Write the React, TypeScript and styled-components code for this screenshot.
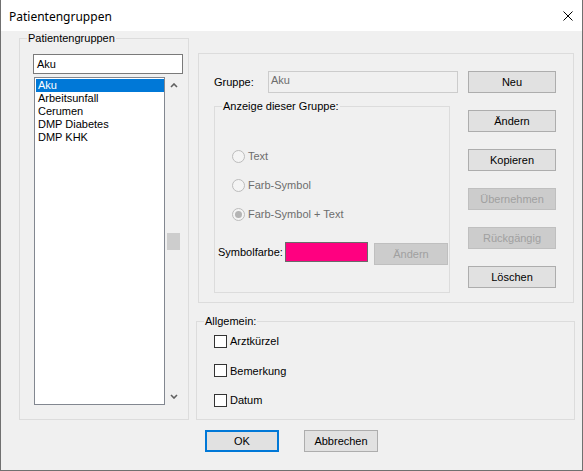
import React from 'react';
import styled, { createGlobalStyle } from 'styled-components';

const GlobalStyle = createGlobalStyle`
  html, body {
    margin: 0;
    padding: 0;
    background: #ffffff;
  }
  * {
    box-sizing: border-box;
  }
`;

const Window = styled.div`
  width: 583px;
  height: 471px;
  display: flex;
  flex-direction: column;
  background: #f0f0f0;
  border: 1px solid #707070;
  border-top: none;
  font-family: "Liberation Sans", Arial, sans-serif;
  font-size: 11px;
  color: #000000;
`;

const TitleBar = styled.div`
  height: 31px;
  flex: none;
  display: flex;
  align-items: center;
  justify-content: space-between;
  padding: 2px 9px 0 8px;
  background: #ffffff;
  font-family: "Segoe UI", "Noto Sans", sans-serif;
  font-size: 12px;
`;

const CloseIcon = styled.svg`
  width: 10px;
  height: 10px;
  margin-top: -2px;
`;

const Body = styled.div`
  display: flex;
  gap: 7px;
  padding: 7px 0 0 18px;
`;

const GroupBox = styled.div<{ $w: number; $h: number }>`
  position: relative;
  width: ${(p) => p.$w}px;
  height: ${(p) => p.$h}px;
  border: 1px solid #dcdcdc;
  flex: none;
`;

const Legend = styled.span`
  position: absolute;
  top: -7px;
  left: 7px;
  padding: 0 1px;
  line-height: 13px;
  background: #f0f0f0;
  white-space: nowrap;
`;

const LeftGroup = styled(GroupBox)`
  padding: 15px 0 0 13px;
`;

const SearchInput = styled.div`
  width: 150px;
  height: 20px;
  border: 1px solid #7a7a7a;
  background: #ffffff;
  padding-left: 3px;
  line-height: 18px;
`;

const ListRow = styled.div`
  display: flex;
  margin: 3px 0 0 1px;
`;

const ListBox = styled.div`
  width: 131px;
  height: 328px;
  border: 1px solid #828790;
  background: #ffffff;
  padding: 1px 0 0 1px;
`;

const ListItem = styled.div<{ $selected?: boolean }>`
  height: 13px;
  line-height: 13px;
  padding-left: 2px;
  white-space: nowrap;
  background: ${(p) => (p.$selected ? '#0078d7' : 'transparent')};
  color: ${(p) => (p.$selected ? '#ffffff' : '#000000')};
`;

const ScrollBar = styled.div`
  width: 17px;
  height: 328px;
  display: flex;
  flex-direction: column;
`;

const ScrollArrow = styled.div`
  height: 17px;
  flex: none;
  display: flex;
  align-items: center;
  justify-content: center;
`;

const ScrollTrack = styled.div`
  flex: 1;
  padding: 0 2px;
`;

const Thumb = styled.div<{ $offset: number }>`
  margin-top: ${(p) => p.$offset}px;
  height: 17px;
  background: #cdcdcd;
`;

const RightCol = styled.div`
  width: 379px;
  display: flex;
  flex-direction: column;
`;

const TopPanel = styled.div`
  margin: 15px 1px 0 2px;
  height: 250px;
  border: 1px solid #dcdcdc;
  padding: 17px 17px 0 15px;
  display: flex;
  justify-content: space-between;
`;

const FormArea = styled.div`
  width: 244px;
  display: flex;
  flex-direction: column;
`;

const FieldRow = styled.div`
  display: flex;
  align-items: center;
  height: 22px;
`;

const FieldLabel = styled.span<{ $w: number }>`
  width: ${(p) => p.$w}px;
  flex: none;
  white-space: nowrap;
`;

const ReadOnlyInput = styled.div`
  width: 190px;
  height: 22px;
  border: 1px solid #cccccc;
  background: #f0f0f0;
  color: #6d6d6d;
  padding: 2px 0 0 2px;
  line-height: 13px;
`;

const InnerGroup = styled(GroupBox)`
  margin-top: 13px;
  padding: 41px 0 0 3px;
`;

const RadioList = styled.div`
  display: flex;
  flex-direction: column;
  gap: 13px;
  padding-left: 14px;
`;

const OptionRow = styled.label`
  display: flex;
  align-items: center;
  gap: 3px;
  height: 16px;
  white-space: nowrap;
  color: ${(p) => (p.color ? p.color : '#000000')};
`;

const RadioCircle = styled.span<{ $checked?: boolean }>`
  width: 13px;
  height: 13px;
  border-radius: 50%;
  border: 1px solid #bcbcbc;
  background: #f4f4f4;
  display: flex;
  align-items: center;
  justify-content: center;
  flex: none;

  &::after {
    content: '';
    width: 7px;
    height: 7px;
    border-radius: 50%;
    background: ${(p) => (p.$checked ? '#b4b4b4' : 'transparent')};
  }
`;

const ColorRow = styled.div`
  display: flex;
  align-items: flex-start;
  margin-top: 20px;
`;

const ColorLabel = styled.span`
  width: 67px;
  margin-top: 4px;
  line-height: 13px;
  white-space: nowrap;
`;

const ColorSwatch = styled.div<{ $color: string }>`
  width: 83px;
  height: 20px;
  border: 1px solid #6a6a6a;
  background: ${(p) => p.$color};
`;

const Button = styled.button<{ $w?: number; $default?: boolean }>`
  width: ${(p) => p.$w ?? 88}px;
  height: 22px;
  flex: none;
  padding: 0;
  margin: 0;
  font-family: "Liberation Sans", Arial, sans-serif;
  font-size: 11px;
  color: #000000;
  background: #e1e1e1;
  border: ${(p) => (p.$default ? '2px solid #0078d7' : '1px solid #adadad')};

  &:disabled {
    background: #cccccc;
    border-color: #bfbfbf;
    color: #a0a0a0;
  }
`;

const SmallButton = styled(Button)`
  margin: 1px 0 0 6px;
`;

const ButtonCol = styled.div`
  display: flex;
  flex-direction: column;
  gap: 17px;
`;

const GeneralGroup = styled(GroupBox)`
  margin-top: 18px;
  padding: 11px 0 0 17px;
  display: flex;
  flex-direction: column;
  gap: 13.5px;
`;

const CheckBox = styled.span`
  width: 13px;
  height: 13px;
  border: 1px solid #333333;
  background: #ffffff;
  flex: none;
`;

const Footer = styled.div`
  display: flex;
  gap: 25px;
  margin-top: 10px;
  padding-left: 204px;
`;

const Chevron: React.FC<{ down?: boolean }> = ({ down }) => (
  <svg width="8" height="5" viewBox="0 0 8 5">
    <polyline
      points={down ? '1,1 4,4 7,1' : '1,4 4,1 7,4'}
      fill="none"
      stroke="#606060"
      strokeWidth="1.6"
    />
  </svg>
);

const groups = ['Aku', 'Arbeitsunfall', 'Cerumen', 'DMP Diabetes', 'DMP KHK'];
const displayOptions = [
  { label: 'Text', checked: false },
  { label: 'Farb-Symbol', checked: false },
  { label: 'Farb-Symbol + Text', checked: true },
];
const actions = [
  { label: 'Neu', enabled: true },
  { label: 'Ändern', enabled: true },
  { label: 'Kopieren', enabled: true },
  { label: 'Übernehmen', enabled: false },
  { label: 'Rückgängig', enabled: false },
  { label: 'Löschen', enabled: true },
];
const generalOptions = ['Arztkürzel', 'Bemerkung', 'Datum'];

const App: React.FC = () => {
  return (
    <>
      <GlobalStyle />
      <Window>
        <TitleBar>
          <span>Patientengruppen</span>
          <CloseIcon viewBox="0 0 10 10">
            <path d="M0.5 0.5 L9.5 9.5 M9.5 0.5 L0.5 9.5" stroke="#000" strokeWidth="1" />
          </CloseIcon>
        </TitleBar>

        <Body>
          <LeftGroup $w={170} $h={382}>
            <Legend>Patientengruppen</Legend>
            <SearchInput>Aku</SearchInput>
            <ListRow>
              <ListBox>
                {groups.map((g, i) => (
                  <ListItem key={g} $selected={i === 0}>
                    {g}
                  </ListItem>
                ))}
              </ListBox>
              <ScrollBar>
                <ScrollArrow>
                  <Chevron />
                </ScrollArrow>
                <ScrollTrack>
                  <Thumb $offset={139} />
                </ScrollTrack>
                <ScrollArrow>
                  <Chevron down />
                </ScrollArrow>
              </ScrollBar>
            </ListRow>
          </LeftGroup>

          <RightCol>
            <TopPanel>
              <FormArea>
                <FieldRow>
                  <FieldLabel $w={54}>Gruppe:</FieldLabel>
                  <ReadOnlyInput>Aku</ReadOnlyInput>
                </FieldRow>
                <InnerGroup $w={236} $h={187}>
                  <Legend>Anzeige dieser Gruppe:</Legend>
                  <RadioList>
                    {displayOptions.map((o) => (
                      <OptionRow key={o.label} color="#6d6d6d">
                        <RadioCircle $checked={o.checked} />
                        {o.label}
                      </OptionRow>
                    ))}
                  </RadioList>
                  <ColorRow>
                    <ColorLabel>Symbolfarbe:</ColorLabel>
                    <ColorSwatch $color="#ff0080" />
                    <SmallButton $w={74} disabled>
                      Ändern
                    </SmallButton>
                  </ColorRow>
                </InnerGroup>
              </FormArea>
              <ButtonCol>
                {actions.map((a) => (
                  <Button key={a.label} disabled={!a.enabled}>
                    {a.label}
                  </Button>
                ))}
              </ButtonCol>
            </TopPanel>

            <GeneralGroup $w={379} $h={99}>
              <Legend>Allgemein:</Legend>
              {generalOptions.map((o) => (
                <OptionRow key={o}>
                  <CheckBox />
                  {o}
                </OptionRow>
              ))}
            </GeneralGroup>
          </RightCol>
        </Body>

        <Footer>
          <Button $w={74} $default>
            OK
          </Button>
          <Button $w={74}>Abbrechen</Button>
        </Footer>
      </Window>
    </>
  );
};

export default App;
